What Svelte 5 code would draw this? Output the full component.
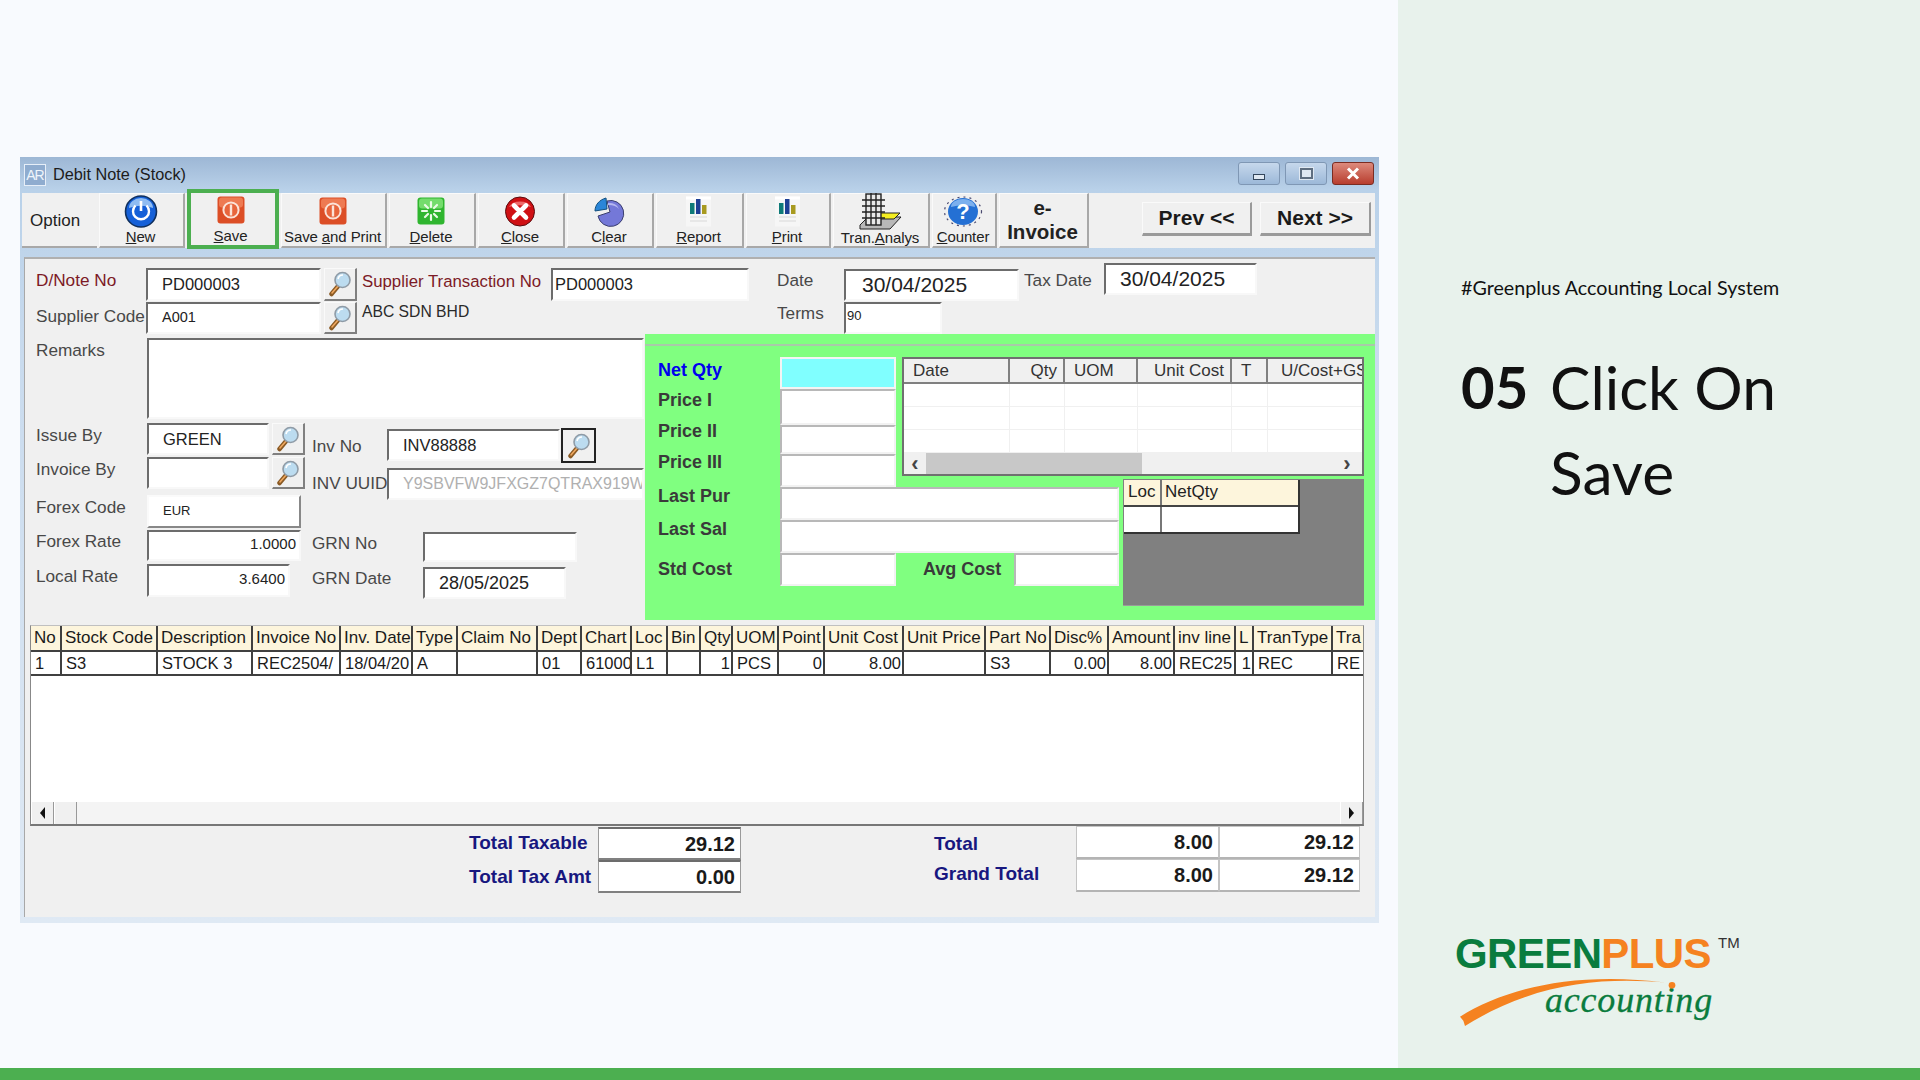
<script lang="ts">
  const tools = [
    { id: 'new', w: 86, pre: '', key: 'N', post: 'ew' },
    { id: 'save', w: 92, pre: '', key: 'S', post: 'ave' },
    { id: 'saveprint', w: 106, pre: 'Save ', key: 'a', post: 'nd Print' },
    { id: 'delete', w: 87, pre: '', key: 'D', post: 'elete' },
    { id: 'close', w: 87, pre: '', key: 'C', post: 'lose' },
    { id: 'clear', w: 87, pre: 'C', key: 'l', post: 'ear' },
    { id: 'report', w: 88, pre: '', key: 'R', post: 'eport' },
    { id: 'print', w: 85, pre: '', key: 'P', post: 'rint' },
    { id: 'tran', w: 97, pre: 'Tran.', key: 'A', post: 'nalys' },
    { id: 'counter', w: 65, pre: '', key: 'C', post: 'ounter' }
  ];

  const columns = [
    { label: 'No', w: 30, value: '1' },
    { label: 'Stock Code', w: 96, value: 'S3' },
    { label: 'Description', w: 95, value: 'STOCK 3' },
    { label: 'Invoice No', w: 88, value: 'REC2504/' },
    { label: 'Inv. Date', w: 72, value: '18/04/20' },
    { label: 'Type', w: 45, value: 'A' },
    { label: 'Claim No', w: 80, value: '' },
    { label: 'Dept', w: 44, value: '01' },
    { label: 'Chart', w: 50, value: '61000' },
    { label: 'Loc', w: 36, value: 'L1' },
    { label: 'Bin', w: 33, value: '' },
    { label: 'Qty', w: 32, value: '1', right: true },
    { label: 'UOM', w: 46, value: 'PCS' },
    { label: 'Point', w: 46, value: '0', right: true },
    { label: 'Unit Cost', w: 79, value: '8.00', right: true },
    { label: 'Unit Price', w: 82, value: '' },
    { label: 'Part No', w: 65, value: 'S3' },
    { label: 'Disc%', w: 58, value: '0.00', right: true },
    { label: 'Amount', w: 66, value: '8.00', right: true },
    { label: 'inv line', w: 61, value: 'REC25' },
    { label: 'L', w: 18, value: '1', right: true },
    { label: 'TranType', w: 79, value: 'REC' },
    { label: 'Tra', w: 32, value: 'RE' }
  ];

  const historyCols = [
    { label: 'Date', w: 105 },
    { label: 'Qty', w: 55, right: true },
    { label: 'UOM', w: 73 },
    { label: 'Unit Cost', w: 94, right: true },
    { label: 'T', w: 36 },
    { label: 'U/Cost+GS', w: 99 }
  ];
</script>

{#snippet lookup(dark = false)}
  <button class="lookup" class:dark>
    <svg width="24" height="26" viewBox="0 0 24 26">
      <line x1="11" y1="14" x2="3.5" y2="23" stroke="#8a5a24" stroke-width="4.5" stroke-linecap="round" />
      <line x1="10.5" y1="14.5" x2="4" y2="22" stroke="#f0a860" stroke-width="1.6" stroke-linecap="round" />
      <circle cx="14.5" cy="9" r="7.5" fill="#bcdcf0" stroke="#8f9ba6" stroke-width="1.6" />
      <path d="M10 8a5 5 0 0 1 5-4" fill="none" stroke="#fff" stroke-width="1.6" />
    </svg>
  </button>
{/snippet}

{#snippet icon(id: string)}
  {#if id === 'new'}
    <svg width="34" height="33" viewBox="0 0 34 33">
      <circle cx="17" cy="16.5" r="15.5" fill="#1560d8" stroke="#10305e" stroke-width="1.6" />
      <path d="M5 13a12 10 0 0 1 24 0a20 10 0 0 0-24 0z" fill="#8fbcf2" />
      <path d="M11.5 10.5a8 8 0 1 0 11 0" fill="none" stroke="#fff" stroke-width="2.4" />
      <line x1="17" y1="6" x2="17" y2="16" stroke="#fff" stroke-width="2.6" />
    </svg>
  {:else if id === 'save' || id === 'saveprint'}
    <svg width="28" height="28" viewBox="0 0 28 28">
      <rect x="0.5" y="0.5" width="27" height="27" rx="3" fill="#dc4e26" />
      <rect x="2" y="1.5" width="24" height="10" rx="3" fill="#ee7a52" />
      <circle cx="14" cy="14" r="7.6" fill="#e8653c" stroke="#fbe3d8" stroke-width="2" />
      <rect x="12.8" y="8.5" width="2.4" height="11" fill="#fbe3d8" />
    </svg>
  {:else if id === 'delete'}
    <svg width="28" height="28" viewBox="0 0 28 28">
      <rect x="0.5" y="0.5" width="27" height="27" rx="3" fill="#2fb52f" />
      <rect x="2" y="1.5" width="24" height="10" rx="3" fill="#74dc6c" />
      <g stroke="#eafbe6" stroke-width="2.2" stroke-linecap="round">
        <line x1="14" y1="5" x2="14" y2="10" /><line x1="14" y1="18" x2="14" y2="23" />
        <line x1="5" y1="14" x2="10" y2="14" /><line x1="18" y1="14" x2="23" y2="14" />
        <line x1="8" y1="8" x2="11" y2="11" /><line x1="17" y1="17" x2="20" y2="20" />
        <line x1="20" y1="8" x2="17" y2="11" /><line x1="11" y1="17" x2="8" y2="20" />
      </g>
    </svg>
  {:else if id === 'close'}
    <svg width="30" height="31" viewBox="0 0 30 31">
      <circle cx="15" cy="15.5" r="14.5" fill="#cf1014" stroke="#5a0c0e" stroke-width="1" />
      <path d="M4 11a12 9 0 0 1 22 0a20 9 0 0 0-22 0z" fill="#ee6a6a" />
      <path d="M9 9.5l6 6m0 0l6-6m-6 6l6 6m-6-6l-6 6" stroke="#fff" stroke-width="4.6" stroke-linecap="round" />
    </svg>
  {:else if id === 'clear'}
    <svg width="32" height="31" viewBox="0 0 32 31">
      <path d="M14 5A13 13 0 1 1 5 20L17 16z" fill="#7478d8" stroke="#3b3f6e" stroke-width="1" />
      <path d="M15 7A10 8 0 0 1 26 13A12 8 0 0 0 15 9z" fill="#b6b8f0" />
      <path d="M14 13L2 15C2 9 6 4 13 2z" fill="#2a86d8" stroke="#14507e" stroke-width="1" />
    </svg>
  {:else if id === 'report' || id === 'print'}
    <svg width="27" height="31" viewBox="0 0 27 31">
      <rect x="1" y="0.5" width="25" height="30" fill="#f6f6f6" />
      <rect x="1" y="0.5" width="25" height="3" fill="#fff" />
      <rect x="5" y="7" width="4.5" height="11" fill="#0e7a78" />
      <rect x="11" y="3" width="4.5" height="15" fill="#1d3f94" />
      <rect x="17" y="9" width="4.5" height="9" fill="#a89a20" />
      <line x1="5" y1="21" x2="22" y2="21" stroke="#d8d8d8" />
      <line x1="5" y1="25" x2="22" y2="25" stroke="#d8d8d8" />
    </svg>
  {:else if id === 'tran'}
    <svg width="46" height="38" viewBox="0 0 46 38">
      <path d="M3 32L11 24H44L33 36H3z" fill="#b8b8b8" stroke="#222" />
      <path d="M22 20H43L37 26H22z" fill="#f4ee20" stroke="#222" />
      <rect x="9" y="1" width="15" height="31" fill="#e8e8e8" stroke="#222" stroke-width="1.4" />
      <path d="M14 0V32M19 0V32M5 7H28M5 13H28M5 19H28M5 25H28" stroke="#222" stroke-width="1.4" fill="none" />
    </svg>
  {:else if id === 'counter'}
    <svg width="40" height="31" viewBox="0 0 40 31">
      <ellipse cx="20" cy="15.5" rx="18.5" ry="14.5" fill="none" stroke="#4a4a70" stroke-width="1.2" stroke-dasharray="2 4" />
      <ellipse cx="20" cy="15.5" rx="15" ry="13.5" fill="#2470d4" />
      <path d="M8 11a12 8 0 0 1 24 0a20 8 0 0 0-24 0z" fill="#7cb0ee" />
      <text x="20" y="23" text-anchor="middle" class="qmark">?</text>
    </svg>
  {/if}
{/snippet}

<div class="page">
  <div class="main">
    <div class="stage">
      <div class="window">
        <div class="titlebar">
          <span class="app-icon">AR</span>
          <span class="title">Debit Note (Stock)</span>
          <div class="caption-btns">
            <span class="cap"><i class="min-glyph"></i></span>
            <span class="cap"><i class="max-glyph"></i></span>
            <span class="cap close-cap">
              <svg width="16" height="13" viewBox="0 0 16 13">
                <path d="M3 1.5l10 10M13 1.5l-10 10" stroke="#fff" stroke-width="3" />
              </svg>
            </span>
          </div>
        </div>

        <div class="toolbar">
          <div class="option">Option</div>
          {#each tools as t}
            <button class="tool" class:current={t.id === 'save'} style="width:{t.w}px">
              <span class="tool-icon">{@render icon(t.id)}</span>
              <span class="tool-label">{t.pre}<u>{t.key}</u>{t.post}</span>
            </button>
          {/each}
          <button class="tool einvoice">e-<br />Invoice</button>
          <button class="nav prev">Prev &lt;&lt;</button>
          <button class="nav next">Next &gt;&gt;</button>
        </div>

        <div class="panel">
          <div class="head">
            <div class="head-a">
              <div class="row r-dnote">
                <span class="lbl red w-110">D/Note No</span>
                <div class="inp val-17 f-dnote">PD000003</div>
                {@render lookup()}
              </div>
              <div class="row r-supp">
                <span class="lbl w-110">Supplier Code</span>
                <div class="inp val-14 f-dnote up-1">A001</div>
                {@render lookup()}
              </div>
            </div>
            <div class="head-b">
              <div class="row r-dnote">
                <span class="lbl red trans">Supplier Transaction No</span>
                <div class="inp val-17 f-trans">PD000003</div>
              </div>
              <div class="abc">ABC SDN BHD</div>
            </div>
            <div class="head-c">
              <div class="row r-date">
                <span class="lbl w-date">Date</span>
                <div class="inp val-21 f-date">30/04/2025</div>
              </div>
              <div class="row r-terms">
                <span class="lbl w-date">Terms</span>
                <div class="inp val-13 f-terms up-3">90</div>
              </div>
            </div>
            <div class="head-d">
              <span class="lbl w-tax">Tax Date</span>
              <div class="inp val-21 f-tax">30/04/2025</div>
            </div>
          </div>

          <div class="body">
            <div class="fields">
              <div class="remarks">
                <span class="lbl w-111">Remarks</span>
                <div class="inp remark-box"></div>
              </div>
              <div class="fields-cols">
                <div class="col-one">
                  <div class="row r-32 m-0">
                    <span class="lbl w-111">Issue By</span>
                    <div class="inp val-17 f-issue">GREEN</div>
                    {@render lookup()}
                  </div>
                  <div class="row r-32 m-2">
                    <span class="lbl w-111">Invoice By</span>
                    <div class="inp f-issue"></div>
                    {@render lookup()}
                  </div>
                  <div class="row r-33 m-6">
                    <span class="lbl w-111">Forex Code</span>
                    <div class="inp val-13 f-forex raised up-1">EUR</div>
                  </div>
                  <div class="row r-31 m-2">
                    <span class="lbl w-111">Forex Rate</span>
                    <div class="inp val-15 num f-forex">1.0000</div>
                  </div>
                  <div class="row r-33 m-3">
                    <span class="lbl w-111">Local Rate</span>
                    <div class="inp val-15 num f-local">3.6400</div>
                  </div>
                </div>
                <div class="col-two">
                  <div class="row r-inv">
                    <span class="lbl w-75 lbl-low">Inv No</span>
                    <div class="inp val-17 f-inv">INV88888</div>
                    {@render lookup(true)}
                  </div>
                  <div class="row r-uuid">
                    <span class="lbl w-75 lbl-mid">INV UUID</span>
                    <div class="inp val-16 muted f-uuid">Y9SBVFW9JFXGZ7QTRAX919W</div>
                  </div>
                  <div class="row r-grn">
                    <span class="lbl w-111-b lbl-high">GRN No</span>
                    <div class="inp f-grn"></div>
                  </div>
                  <div class="row r-grn2">
                    <span class="lbl w-111-b lbl-high">GRN Date</span>
                    <div class="inp val-18 f-grndate">28/05/2025</div>
                  </div>
                </div>
              </div>
            </div>

            <div class="green">
              <div class="strip"></div>
              <div class="green-grid">
                <span class="g-lbl net a1">Net Qty</span>
                <div class="g-inp cyan b1"></div>
                <span class="g-lbl a2">Price I</span>
                <div class="g-inp b2"></div>
                <span class="g-lbl a3">Price II</span>
                <div class="g-inp b3"></div>
                <span class="g-lbl a4">Price III</span>
                <div class="g-inp b4"></div>
                <span class="g-lbl a5">Last Pur</span>
                <div class="g-inp b5"></div>
                <span class="g-lbl a6">Last Sal</span>
                <div class="g-inp b6"></div>
                <span class="g-lbl a7">Std Cost</span>
                <div class="g-inp b7"></div>

                <div class="avg">
                  <span class="g-lbl">Avg Cost</span>
                  <div class="g-inp avg-inp"></div>
                </div>

                <div class="history">
                  <table>
                    <colgroup>
                      {#each historyCols as c}<col style="width:{c.w}px" />{/each}
                    </colgroup>
                    <thead>
                      <tr>
                        {#each historyCols as c}<th class:right={c.right}>{c.label}</th>{/each}
                      </tr>
                    </thead>
                    <tbody>
                      {#each [0, 1, 2] as _}
                        <tr>{#each historyCols as _c}<td></td>{/each}</tr>
                      {/each}
                    </tbody>
                  </table>
                  <div class="hscroll">
                    <span class="chev">‹</span>
                    <span class="thumb"></span>
                    <span class="chev end">›</span>
                  </div>
                </div>

                <div class="stock">
                  <div class="stock-table">
                    <div class="st-head"><span class="st-loc">Loc</span><span>NetQty</span></div>
                    <div class="st-row"><span class="st-loc"></span><span></span></div>
                  </div>
                </div>
              </div>
            </div>
          </div>

          <div class="grid">
            <table>
              <colgroup>
                {#each columns as c}<col style="width:{c.w}px" />{/each}
              </colgroup>
              <thead>
                <tr>{#each columns as c}<th>{c.label}</th>{/each}</tr>
              </thead>
              <tbody>
                <tr>
                  {#each columns as c}<td class:right={c.right}>{c.value}</td>{/each}
                </tr>
              </tbody>
            </table>
            <div class="grid-space"></div>
            <div class="grid-scroll">
              <span class="sb-btn"><i class="tri-l"></i></span>
              <span class="sb-btn sb-thumb"></span>
              <span class="sb-fill"></span>
              <span class="sb-btn"><i class="tri-r"></i></span>
            </div>
          </div>

          <div class="totals">
            <div class="tot-left">
              <span class="t-lbl">Total Taxable</span>
              <div class="t-val dark">29.12</div>
              <span class="t-lbl">Total Tax Amt</span>
              <div class="t-val dark">0.00</div>
            </div>
            <div class="tot-right">
              <span class="t-lbl">Total</span>
              <div class="t-val">8.00</div>
              <div class="t-val">29.12</div>
              <span class="t-lbl up">Grand Total</span>
              <div class="t-val">8.00</div>
              <div class="t-val">29.12</div>
            </div>
          </div>
        </div>
      </div>
    </div>

    <aside class="side">
      <div class="tag">#Greenplus Accounting Local System</div>
      <div class="step">
        <span class="step-no">05</span>
        <span class="step-text">Click On<br />Save</span>
      </div>
      <div class="logo">
        <svg class="swoosh" width="340" height="180" viewBox="0 0 1020 540">
          <path d="M120 350C250 270 450 212 740 248C550 232 350 245 135 378L130 362z" fill="#f58220" />
          <circle cx="756" cy="256" r="10" fill="#f58220" />
        </svg>
        <div class="wordmark"><span class="wm-green">GREEN</span><span class="wm-orange">PLUS</span><span class="tm">TM</span></div>
        <div class="accounting">accounting</div>
      </div>
    </aside>
  </div>
  <div class="bar"></div>
</div>

<style>
  :global(body) {
    margin: 0;
  }

  .page {
    width: 1920px;
    height: 1080px;
    overflow: hidden;
    display: flex;
    flex-direction: column;
    font-family: 'Liberation Sans', Arial, sans-serif;
    color: #222;
  }

  .main {
    display: flex;
    height: 1068px;
  }

  .bar {
    height: 12px;
    background: #4caf50;
  }

  .stage {
    width: 1398px;
    background: #f8fafe;
    padding: 157px 0 0 20px;
    box-sizing: border-box;
  }

  .window {
    width: 1359px;
    height: 766px;
    box-sizing: border-box;
    border-radius: 3px 3px 0 0;
    display: flex;
    flex-direction: column;
    padding: 0 4px 6px 2px;
    background: linear-gradient(#a9c2dd 0, #b9d1e9 33px, #c9dbee 200px, #dfe9f4 100%);
  }

  /* title bar */
  .titlebar {
    height: 33px;
    flex: none;
    display: flex;
    align-items: center;
    background: linear-gradient(#9db7d5, #b9d1e9);
    margin: 0 -4px 0 -2px;
    padding: 2px 5px 0 4px;
    box-sizing: border-box;
  }

  .app-icon {
    width: 22px;
    height: 22px;
    border: 1px solid #e6eef8;
    box-sizing: border-box;
    color: #eef4fb;
    font-size: 14px;
    line-height: 20px;
    text-align: center;
    letter-spacing: -1px;
    background: #8faccf;
  }

  .title {
    margin-left: 7px;
    font-size: 16.3px;
    color: #1c1c1c;
  }

  .caption-btns {
    margin-left: auto;
    display: flex;
    gap: 5px;
    margin-top: -2px;
  }

  .cap {
    width: 42px;
    height: 23px;
    box-sizing: border-box;
    border: 1px solid #7f97b4;
    border-radius: 3px;
    background: linear-gradient(#c6d8ec, #9cb8d8);
    display: flex;
    align-items: center;
    justify-content: center;
  }

  .min-glyph {
    width: 12px;
    height: 6px;
    margin-top: 6px;
    box-sizing: border-box;
    border: 1px solid #33465c;
    background: #dfe8f2;
  }

  .max-glyph {
    width: 13px;
    height: 11px;
    box-sizing: border-box;
    border: 2px solid #5e6e80;
    outline: 1px solid #dfe8f2;
    background: #dfe8f2;
  }

  .close-cap {
    background: linear-gradient(#dd8a7c, #b83d2e);
    border-color: #7a2c22;
  }

  /* toolbar */
  .toolbar {
    margin-top: 3px;
    height: 55px;
    flex: none;
    display: flex;
    gap: 2px;
    background: #f0f0f0;
    position: relative;
  }

  .option {
    width: 75px;
    font-size: 17px;
    line-height: 55px;
    padding-left: 8px;
    box-sizing: border-box;
    border-bottom: 2px solid #a8a8a8;
  }

  .tool {
    padding: 0 2px 0 0;
    margin: 0;
    height: 55px;
    flex: none;
    box-sizing: border-box;
    background: #f0f0f0;
    border: 0;
    border-top: 1px solid #fafafa;
    border-left: 1px solid #fafafa;
    border-right: 2px solid #a8a8a8;
    border-bottom: 2px solid #a8a8a8;
    font-family: inherit;
    color: #222;
    display: flex;
    flex-direction: column;
    align-items: center;
  }

  .tool.current {
    border: 4px solid #4caf50;
    height: 60px;
    margin-top: -4px;
    padding-right: 5px;
  }

  .tool-icon {
    height: 35px;
    display: flex;
    align-items: center;
    justify-content: center;
  }

  .tool.current .tool-icon {
    height: 34px;
  }

  .tool-label {
    font-size: 15px;
    line-height: 18px;
    letter-spacing: -0.1px;
    white-space: nowrap;
  }

  .einvoice {
    width: 90px;
    display: block;
    font-size: 20.5px;
    font-weight: bold;
    line-height: 24px;
    text-align: center;
  }

  .qmark {
    font-family: 'Liberation Sans', sans-serif;
    font-weight: bold;
    font-size: 22px;
    fill: #fff;
  }

  .nav {
    height: 34px;
    align-self: center;
    margin-top: -4px;
    padding: 0;
    box-sizing: border-box;
    background: #f0f0f0;
    border: 0;
    border-top: 1px solid #fafafa;
    border-left: 1px solid #fafafa;
    border-right: 2px solid #9a9a9a;
    border-bottom: 3px solid #9a9a9a;
    font-family: inherit;
    font-size: 21px;
    font-weight: bold;
    color: #1a1a1a;
  }

  .prev {
    width: 110px;
    margin-left: 51px;
  }

  .next {
    width: 111px;
    margin-left: 6px;
  }

  /* form panel */
  .panel {
    margin-top: 9px;
    margin-left: 2px;
    flex: 1;
    min-height: 0;
    background: #f0f0f0;
    border-top: 2px solid #b0b0b0;
    border-left: 1px solid #a8a8a8;
    display: flex;
    flex-direction: column;
  }

  .head {
    height: 75px;
    flex: none;
    display: flex;
    padding-left: 11px;
    position: relative;
  }

  .row {
    display: flex;
    flex: none;
  }

  .lbl {
    font-size: 17.2px;
    line-height: 20px;
    color: #484848;
    white-space: nowrap;
    overflow: hidden;
    flex: none;
  }

  .red {
    color: #7c1a26;
  }

  .inp {
    box-sizing: border-box;
    flex: none;
    background: #fff;
    border-top: 2px solid #6c6c6c;
    border-left: 2px solid #6c6c6c;
    border-right: 2px solid #f8f8f8;
    border-bottom: 2px solid #f8f8f8;
    white-space: nowrap;
    overflow: hidden;
    padding-left: 14px;
    color: #222;
    display: flex;
    align-items: center;
  }

  .raised {
    border: 0;
    border-top: 2px solid #fafafa;
    border-left: 2px solid #fafafa;
    border-right: 2px solid #888;
    border-bottom: 2px solid #888;
  }

  .num {
    justify-content: flex-end;
    padding: 0 3px 4px 0;
  }

  .up-1 {
    padding-bottom: 2px;
  }

  .up-3 {
    padding-bottom: 5px;
  }

  .muted {
    color: #b0b0b0;
  }

  .val-13 { font-size: 13px; }
  .val-14 { font-size: 14.5px; }
  .val-15 { font-size: 15px; }
  .val-16 { font-size: 16px; }
  .val-17 { font-size: 16.5px; }
  .val-18 { font-size: 18px; }
  .val-21 { font-size: 21px; }

  .lookup {
    padding: 0;
    margin-left: 3px;
    flex: none;
    width: 33px;
    box-sizing: border-box;
    background: #f0f0f0;
    border: 0;
    border-top: 1px solid #fafafa;
    border-left: 1px solid #fafafa;
    border-right: 2px solid #808080;
    border-bottom: 2px solid #808080;
    display: flex;
    align-items: center;
    justify-content: center;
  }

  .lookup.dark {
    margin-left: 1px;
    width: 35px;
    height: 35px;
    margin-top: -1px;
    border: 2px solid #222;
  }

  .head-a {
    width: 321px;
    padding-top: 9px;
    flex: none;
  }

  .r-dnote { height: 33px; }
  .r-supp { height: 32px; margin-top: 1px; }

  .w-110 { width: 110px; }
  .w-111 { width: 111px; }
  .w-75 { width: 75px; }
  .w-111-b { width: 111px; }
  .w-date { width: 67px; }
  .w-tax { width: 80px; padding-top: 7px; }

  .f-dnote { width: 175px; }
  .f-trans { width: 198px; padding-left: 2px; }
  .f-date { width: 175px; padding-left: 16px; }
  .f-terms { width: 98px; padding-left: 1px; }
  .f-tax { width: 153px; padding-left: 14px; height: 32px; }
  .f-issue { width: 122px; }
  .f-forex { width: 154px; }
  .f-local { width: 143px; }
  .f-inv { width: 173px; }
  .f-uuid { width: 257px; }
  .f-grn { width: 154px; }
  .f-grndate { width: 143px; }

  .r-dnote .lbl { padding-top: 2px; }
  .r-supp .lbl { padding-top: 4px; }

  .head-b {
    margin-left: 5px;
    width: 387px;
    padding-top: 9px;
    flex: none;
  }

  .trans {
    width: 189px;
    font-size: 16.8px;
    padding-top: 4px !important;
  }

  .abc {
    font-size: 15.7px;
    line-height: 20px;
    margin-top: 1px;
    color: #2a2a2a;
  }

  .head-c {
    margin-left: 28px;
    width: 242px;
    padding-top: 10px;
    flex: none;
  }

  .r-date { height: 32px; }
  .r-date .lbl { padding-top: 1px; }
  .r-terms { height: 32px; margin-top: 1px; }
  .r-terms .lbl { padding-top: 1px; }

  .head-d {
    margin-left: 5px;
    display: flex;
    padding-top: 4px;
    align-items: flex-start;
  }

  /* lower part of the form */
  .body {
    height: 286px;
    flex: none;
    display: flex;
  }

  .fields {
    width: 620px;
    flex: none;
    padding-left: 11px;
    box-sizing: border-box;
  }

  .remarks {
    display: flex;
    padding-top: 4px;
  }

  .remarks .lbl {
    padding-top: 2px;
  }

  .remark-box {
    width: 497px;
    height: 81px;
  }

  .fields-cols {
    display: flex;
  }

  .col-one {
    width: 276px;
    flex: none;
    padding-top: 4px;
  }

  .r-31 { height: 31px; }
  .r-32 { height: 32px; }
  .r-33 { height: 33px; }
  .m-0 { margin-top: 0; }
  .m-2 { margin-top: 2px; }
  .m-3 { margin-top: 3px; }
  .m-6 { margin-top: 6px; }

  .col-one .lbl {
    padding-top: 2px;
  }

  .col-one .r-31 .lbl {
    padding-top: 1px;
  }

  .col-two {
    flex: 1;
    min-width: 0;
  }

  .r-inv { height: 32px; margin-top: 10px; }
  .r-uuid { height: 32px; margin-top: 7px; }
  .r-grn { height: 30px; margin-top: 32px; }
  .r-grn2 { height: 32px; margin-top: 5px; }

  .lbl-mid {
    line-height: 30px;
  }

  .lbl-low {
    line-height: 34px;
  }

  .lbl-high {
    line-height: 22px;
  }

  /* green stock panel */
  .green {
    flex: 1;
    background: #80ff80;
    padding-bottom: 0;
    display: flex;
    flex-direction: column;
  }

  .strip {
    height: 10px;
    flex: none;
    margin-left: 0;
    border-bottom: 2px solid #a9c9a9;
  }

  .green-grid {
    display: grid;
    grid-template-columns: 122px 116px 6px 217px 4px 241px;
    grid-template-rows: 32px 36px 29px 22px 3px 8px 33px 33px 33px 20px;
    margin: 11px 0 0 13px;
  }

  .g-lbl {
    font-size: 18px;
    font-weight: bold;
    color: #3a3a3a;
    line-height: 22px;
    white-space: nowrap;
  }

  .net {
    color: #0000ee;
  }

  .g-inp {
    box-sizing: border-box;
    background: #fff;
    border-top: 2px solid #b8b8b8;
    border-left: 2px solid #b8b8b8;
    border-right: 2px solid #f2f2f2;
    border-bottom: 2px solid #f2f2f2;
  }

  .cyan {
    background: #80ffff;
    border-color: #f4f4f4;
  }

  .a1 { grid-area: 1 / 1; margin-top: 2px; }
  .a2 { grid-area: 2 / 1; }
  .a3 { grid-area: 3 / 1; margin-top: -5px; }
  .a4 { grid-area: 4 / 1 / 7 / 2; margin-top: -3px; }
  .a5 { grid-area: 7 / 1; margin-top: -2px; }
  .a6 { grid-area: 8 / 1; margin-top: -2px; }
  .a7 { grid-area: 9 / 1; margin-top: 5px; }
  .b1 { grid-area: 1 / 2; }
  .b2 { grid-area: 2 / 2; }
  .b3 { grid-area: 3 / 2; }
  .b4 { grid-area: 4 / 2 / 7 / 3; }
  .b5 { grid-area: 7 / 2 / 8 / 5; }
  .b6 { grid-area: 8 / 2 / 9 / 5; }
  .b7 { grid-area: 9 / 2; }

  .avg {
    grid-area: 9 / 3 / 10 / 5;
    display: flex;
    padding-left: 27px;
    align-items: stretch;
  }

  .avg .g-lbl {
    width: 91px;
    line-height: 32px;
  }

  .avg-inp {
    flex: 1;
  }

  .history {
    grid-area: 1 / 4 / 5 / 7;
    box-sizing: border-box;
    border: 2px solid #707070;
    background: #fff;
    display: flex;
    flex-direction: column;
    overflow: hidden;
  }

  .history table {
    table-layout: fixed;
    border-collapse: collapse;
    width: 462px;
    font-size: 17px;
  }

  .history th {
    height: 24px;
    padding: 0 9px;
    box-sizing: border-box;
    background: #f0f0f0;
    font-weight: normal;
    text-align: left;
    white-space: nowrap;
    overflow: hidden;
    color: #333;
    border-right: 2px solid #808080;
    border-bottom: 2px solid #808080;
  }

  .history th.right {
    text-align: right;
    padding-right: 6px;
  }

  .history th:last-child {
    border-right: 0;
    padding-left: 13px;
  }

  .history td {
    height: 22px;
    padding: 0;
    border-right: 1px solid #f0f0f0;
    border-bottom: 1px solid #f0f0f0;
  }

  .hscroll {
    flex: 1;
    display: flex;
    align-items: center;
    background: #f0f0f0;
    min-height: 0;
  }

  .chev {
    width: 22px;
    text-align: center;
    font-size: 22px;
    line-height: 18px;
    font-weight: bold;
    color: #444;
  }

  .chev.end {
    margin-left: auto;
    padding-right: 4px;
  }

  .thumb {
    width: 216px;
    height: 21px;
    background: #c8c8c8;
  }

  .stock {
    grid-area: 6 / 6 / 11 / 7;
    background: #808080;
    border-bottom: 1px solid #9a9a9a;
    box-sizing: border-box;
    padding: 1px 0 0 1px;
  }

  .stock-table {
    width: 174px;
    font-size: 17px;
    background: #fff;
    box-shadow: 1px 1px 0 1px #333;
  }

  .st-head {
    height: 25px;
    display: flex;
    background: #fdf5dc;
    border-bottom: 2px solid #444;
    line-height: 24px;
  }

  .st-row {
    height: 25px;
    display: flex;
  }

  .st-loc {
    width: 38px;
    box-sizing: border-box;
    padding-left: 4px;
    border-right: 2px solid #777;
  }

  .st-head span:last-child {
    padding-left: 3px;
  }

  /* item grid */
  .grid {
    margin: 5px 0 0 5px;
    width: 1334px;
    height: 201px;
    flex: none;
    box-sizing: border-box;
    background: #fff;
    border-left: 1px solid #888;
    border-right: 1px solid #888;
    border-top: 1px solid #c0c0c0;
    border-bottom: 2px solid #777;
    display: flex;
    flex-direction: column;
    overflow: hidden;
  }

  .grid table {
    table-layout: fixed;
    border-collapse: collapse;
    width: 1333px;
    font-size: 16.5px;
    flex: none;
  }

  .grid th,
  .grid td {
    padding: 0 2px 0 4px;
    box-sizing: border-box;
    border-right: 2px solid #404040;
    border-bottom: 2px solid #404040;
    white-space: nowrap;
    overflow: hidden;
    text-align: left;
    font-weight: normal;
    color: #1a1a1a;
  }

  .grid th {
    height: 25px;
    background: #fdf5dc;
    font-size: 17px;
    padding: 0 1px 0 3px;
  }

  .grid td {
    height: 24px;
  }

  .grid td.right {
    text-align: right;
    padding-right: 1px;
  }

  .grid th:last-child,
  .grid td:last-child {
    border-right: 0;
  }

  .grid-space {
    flex: 1;
  }

  .grid-scroll {
    height: 22px;
    flex: none;
    display: flex;
    background: #f4f4f4;
  }

  .sb-btn {
    width: 23px;
    box-sizing: border-box;
    background: #f0f0f0;
    border-right: 1px solid #999;
    border-left: 1px solid #fff;
    display: flex;
    align-items: center;
    justify-content: center;
  }

  .sb-fill {
    flex: 1;
  }

  .tri-l {
    border: 6px solid transparent;
    border-left: 0;
    border-right: 5px solid #111;
  }

  .tri-r {
    border: 6px solid transparent;
    border-right: 0;
    border-left: 5px solid #111;
  }

  /* totals */
  .totals {
    flex: 1;
    display: flex;
    padding: 1px 0 0 444px;
  }

  .tot-left {
    display: grid;
    grid-template-columns: 129px 143px;
    grid-auto-rows: 33px;
    align-items: center;
  }

  .tot-left .t-lbl:first-child {
    margin-top: -2px;
  }

  .tot-right {
    margin-left: 193px;
    display: grid;
    grid-template-columns: 142px 143px 141px;
    grid-auto-rows: 33px;
    align-items: center;
    margin-top: -1px;
  }

  .tot-right .t-lbl {
    margin-top: 3px;
  }

  .t-lbl {
    font-size: 19px;
    font-weight: bold;
    color: #17177f;
    white-space: nowrap;
  }

  .tot-right .t-lbl.up {
    margin-top: -3px;
  }

  .t-val {
    height: 33px;
    box-sizing: border-box;
    background: #fff;
    border: 1px solid #c4c4c4;
    border-bottom: 2px solid #b4b4b4;
    font-size: 20px;
    font-weight: bold;
    color: #1a1a1a;
    text-align: right;
    line-height: 30px;
    padding-right: 5px;
  }

  .t-val.dark {
    border-color: #9a9a9a;
    border-top: 2px solid #6c6c6c;
    border-bottom: 2px solid #808080;
  }

  /* right hand side */
  .side {
    flex: 1;
    background: #e8f2ec;
    padding: 275px 0 0 63px;
    box-sizing: border-box;
    display: flex;
    flex-direction: column;
    font-family: Lato, 'Open Sans', sans-serif;
    color: #111;
  }

  .tag {
    font-size: 19.7px;
    line-height: 25px;
  }

  .step {
    display: flex;
    margin-top: 44px;
    font-size: 60.5px;
    line-height: 85px;
  }

  .step-no {
    width: 89px;
    font-weight: bold;
    flex: none;
    font-size: 58px;
  }

  .logo {
    position: relative;
    margin: auto 0 0 -41px;
    width: 340px;
    height: 168px;
    box-sizing: border-box;
    padding: 32px 0 0 35px;
    font-family: 'Liberation Sans', sans-serif;
  }

  .swoosh {
    position: absolute;
    left: 0;
    top: 0;
  }

  .wordmark {
    display: flex;
    font-size: 42px;
    line-height: 44px;
    font-weight: bold;
    letter-spacing: -0.6px;
  }

  .wm-green {
    color: #0a7c3e;
  }

  .wm-orange {
    color: #f58220;
  }

  .tm {
    font-size: 15px;
    font-weight: normal;
    line-height: 18px;
    margin: 2px 0 0 7px;
    letter-spacing: 0;
    color: #333;
  }

  .accounting {
    margin: 4px 0 0 90px;
    font-family: 'Liberation Serif', serif;
    font-style: italic;
    font-size: 36px;
    line-height: 40px;
    color: #0a7c3e;
    letter-spacing: 0.8px;
    -webkit-text-stroke: 0.3px #0a7c3e;
  }
</style>
